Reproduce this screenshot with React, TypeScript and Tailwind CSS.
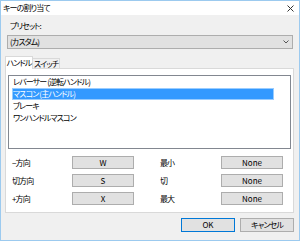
const font = { fontFamily: '"Noto Sans CJK JP", "Noto Sans", sans-serif', fontFeatureSettings: '"palt" 1' };

const rows = [
  { label: "−方向", key: "W", label2: "最小", key2: "None" },
  { label: "切方向", key: "S", label2: "切", key2: "None" },
  { label: "+方向", key: "X", label2: "最大", key2: "None" },
];

const items = ["レバーサー (逆転ハンドル)", "マスコン (主ハンドル)", "ブレーキ", "ワンハンドルマスコン"];

function KeyButton({ text }: { text: string }) {
  return (
    <div className="w-[62px] h-[13px] bg-[#e1e1e1] border border-[#adadad] flex items-center justify-center leading-none tracking-normal">
      {text}
    </div>
  );
}

export default function App() {
  return (
    <div
      className="w-[300px] h-[241px] bg-[#f0f0f0] border border-[#9ccaef] flex flex-col text-[8px] tracking-[-0.9px] text-black overflow-hidden whitespace-nowrap"
      style={font}
    >
      <div className="h-[14px] bg-white flex items-center justify-between pl-[2px] pr-[5px] shrink-0">
        <span className="leading-none">キーの割り当て</span>
        <svg width="7" height="7" viewBox="0 0 7 7" className="text-[#333]">
          <path d="M0.5 0.5 L6.5 6.5 M6.5 0.5 L0.5 6.5" stroke="currentColor" strokeWidth="1" />
        </svg>
      </div>

      <div className="flex flex-col px-[6px]">
        <div className="mt-[5px] ml-[3px] h-[12px] leading-[12px]">プリセット:</div>
        <div className="mt-[3px] h-[14px] bg-[#e1e1e1] border border-[#adadad] flex items-center justify-between pl-[2px] pr-[3px]">
          <span className="leading-none">(カスタム)</span>
          <svg width="6" height="4" viewBox="0 0 6 4">
            <path d="M0.5 0.5 L3 3 L5.5 0.5" stroke="#555" fill="none" strokeWidth="1" />
          </svg>
        </div>

        <div className="mt-[7px] -ml-[2px] flex flex-col">
          <div className="flex items-end h-[12px]">
            <div className="relative z-10 -mb-[1px] h-[13px] w-[28px] bg-white border-t border-l border-r border-[#d9d9d9] flex items-center justify-center leading-none">
              ハンドル
            </div>
            <div className="h-[10px] w-[27px] bg-[#f0f0f0] border-t border-r border-[#d9d9d9] flex items-center justify-center leading-none">
              スイッチ
            </div>
          </div>
          <div className="w-[289px] bg-white border border-[#d9d9d9] flex flex-col px-[2px] pt-[6px] pb-[7px]">
            <div className="h-[74px] border border-[#828790] bg-white flex flex-col pl-[3px] pr-[16px]">
              {items.map((item, i) => (
                <div
                  key={item}
                  className={
                    "h-[12px] leading-[12px] pl-[1px] " +
                    (i === 1 ? "bg-[#3399ff] text-white outline outline-[#99ccff] -outline-offset-1" : "")
                  }
                >
                  {item}
                </div>
              ))}
            </div>
            <div className="mt-[7px] flex flex-col gap-[5px] pl-[4px]">
              {rows.map((r) => (
                <div key={r.label} className="flex items-center h-[13px]">
                  <div className="w-[60px] leading-none">{r.label}</div>
                  <KeyButton text={r.key} />
                  <div className="w-[61px] ml-[26px] leading-none">{r.label2}</div>
                  <KeyButton text={r.key2} />
                </div>
              ))}
            </div>
          </div>
        </div>

        <div className="mt-[5px] mr-[-1px] flex justify-end gap-[5px]">
          <div className="w-[54px] h-[14px] bg-[#e1e1e1] border border-[#0078d7] flex items-center justify-center leading-none tracking-normal">
            OK
          </div>
          <div className="w-[54px] h-[14px] bg-[#e1e1e1] border border-[#adadad] flex items-center justify-center leading-none">
            キャンセル
          </div>
        </div>
      </div>
    </div>
  );
}
